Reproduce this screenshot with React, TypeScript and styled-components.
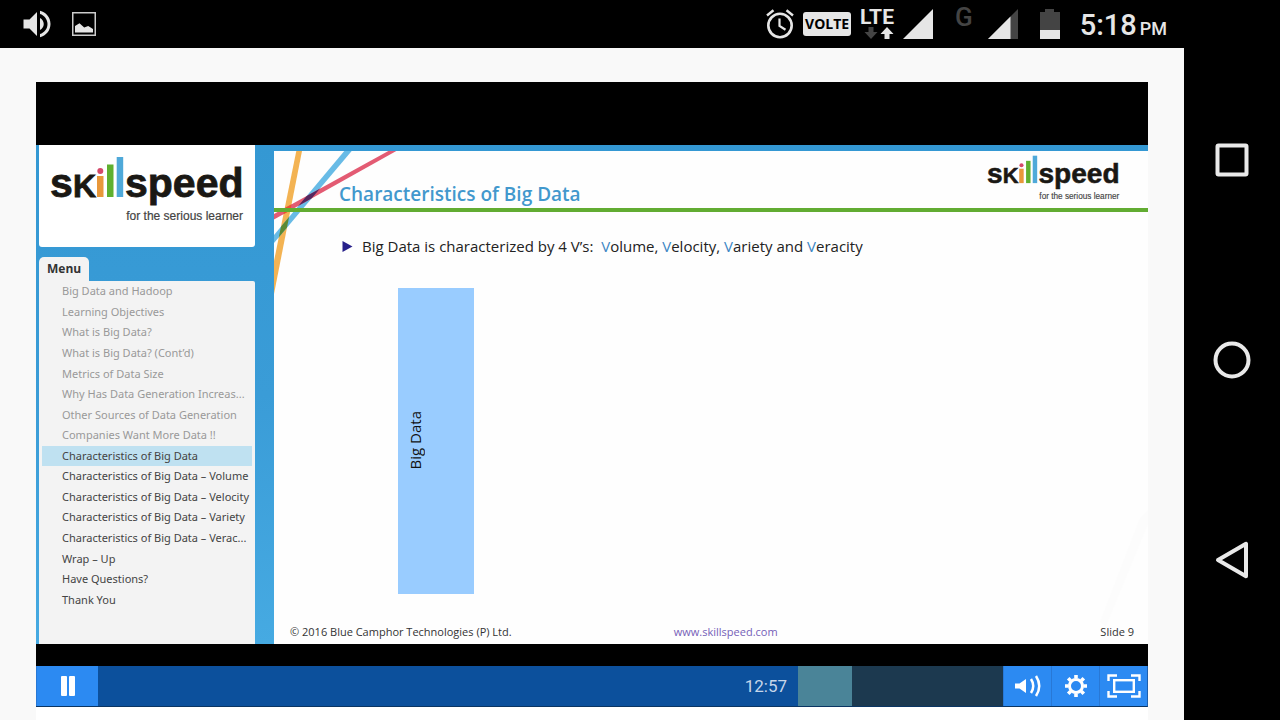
import React from "react";
import styled, { createGlobalStyle } from "styled-components";

const GlobalStyle = createGlobalStyle`
  *, *::before, *::after { box-sizing: border-box; }
  body { margin: 0; background: #000; font-family: "Open Sans", "Noto Sans", sans-serif; }
  h1, h2, p, ul { margin: 0; padding: 0; }
  ul { list-style: none; }
  button { font: inherit; border: 0; padding: 0; background: none; cursor: pointer; }
  a { color: inherit; text-decoration: none; }
  svg { display: block; flex: none; }
`;

const Screen = styled.div`
  display: flex;
  min-height: 100vh;
`;

const Main = styled.div`
  flex: 1;
  min-width: 0;
  display: flex;
  flex-direction: column;
  background: #f9f9f9;
`;

const StatusBar = styled.header`
  display: flex;
  align-items: center;
  justify-content: space-between;
  height: 48px;
  padding: 0 17px 0 19px;
  background: #000;
  color: #e6e6e6;
  font-family: Roboto, sans-serif;
`;

const StatusGroup = styled.div<{ $gap: number }>`
  display: flex;
  align-items: center;
  gap: ${(p) => p.$gap}px;
`;

const VolteBadge = styled.span`
  display: flex;
  align-items: center;
  justify-content: center;
  width: 48px;
  height: 24px;
  border-radius: 3px;
  background: #e6e6e6;
  color: #000;
  font: 700 14px/24px "Open Sans", sans-serif;
`;

const Network = styled.span<{ $dim?: boolean }>`
  display: flex;
  flex-direction: column;
  align-items: flex-end;
  height: 32px;
  font-size: ${(p) => (p.$dim ? 26 : 21)}px;
  font-weight: ${(p) => (p.$dim ? 500 : 700)};
  line-height: 18px;
  color: ${(p) => (p.$dim ? "#444" : "#e6e6e6")};
`;

const Clock = styled.time`
  display: flex;
  align-items: baseline;
  gap: 3px;
  padding-top: 6px;
  font-size: 29px;
  line-height: 46px;
  font-weight: 500;
`;

const Meridiem = styled.span`
  font-size: 18px;
`;

const NavBar = styled.nav`
  width: 96px;
  flex: none;
  display: flex;
  flex-direction: column;
  align-items: center;
  justify-content: space-around;
  padding: 60px 0;
  background: #000;
`;

const NavButton = styled.button`
  display: block;
`;

const Page = styled.main`
  flex: 1;
  display: flex;
  flex-direction: column;
  margin: 34px 36px 0;
  background: #fff;
`;

const Player = styled.section`
  padding-top: 63px;
  background: #000;
`;

const Course = styled.div`
  display: flex;
  gap: 19px;
  min-height: 499px;
  padding-left: 3px;
  background: linear-gradient(#3498d3, #3a9cd7 50%, #46aae2);
`;

const Sidebar = styled.aside`
  width: 216px;
  flex: none;
  display: flex;
  flex-direction: column;
`;

const LogoCard = styled.div`
  padding: 11px 11px 21px;
  border-radius: 0 0 3px 3px;
  background: #fff;
`;

const MenuTab = styled.h2`
  align-self: flex-start;
  margin-top: 10px;
  padding: 0 8px;
  border-radius: 5px 5px 0 0;
  background: #f3f3f3;
  color: #333;
  font-size: 12px;
  font-weight: 700;
  line-height: 24px;
`;

const MenuPanel = styled.nav`
  flex: 1;
  padding: 0 3px;
  border-radius: 0 2px 0 0;
  background: #f3f3f3;
`;

const MenuList = styled.ul`
  display: grid;
  grid-auto-rows: 1fr;
  height: 329px;
`;

const MenuItem = styled.li<{ $state: "seen" | "current" | "next" }>`
  display: flex;
  align-items: center;
  padding-left: 20px;
  background: ${(p) => (p.$state === "current" ? "#bfe1f1" : "transparent")};
  color: ${(p) => (p.$state === "seen" ? "#999" : "#444")};
  font-family: "Noto Sans", sans-serif;
  font-size: 11px;
  line-height: 18px;
  white-space: nowrap;
`;

const Slide = styled.article`
  position: relative;
  flex: 1;
  min-width: 0;
  display: flex;
  flex-direction: column;
  margin-top: 6px;
  background: #fefefe;
`;

const Ribbons = styled.svg`
  position: absolute;
  left: 0;
  top: 0;
`;

const Streak = styled.svg`
  position: absolute;
  right: 0;
  bottom: 0;
`;

const SlideHeader = styled.header`
  position: relative;
  display: flex;
  justify-content: space-between;
  align-items: flex-start;
  height: 61px;
  padding: 4px 28px 0 65px;
  border-bottom: 4px solid #62ac32;
`;

const SlideTitle = styled.h1`
  padding-top: 27px;
  color: #4298cd;
  font-size: 19px;
  font-weight: 600;
  line-height: 24px;
  white-space: nowrap;
`;

const SlideBody = styled.div`
  position: relative;
  flex: 1;
  padding: 23px 68px 0;
`;

const Bullet = styled.p`
  display: flex;
  align-items: center;
  gap: 9px;
  color: #222;
  font-size: 15px;
  line-height: 22px;
  white-space: pre;
`;

const Initial = styled.span`
  color: #3c86c4;
`;

const BigDataBar = styled.div`
  display: flex;
  align-items: center;
  width: 76px;
  height: 306px;
  margin: 31px 0 0 56px;
  padding: 0 0 2px 6px;
  background: #99ccff;
  color: #111;
  font-size: 15px;
  line-height: 22px;
`;

const BarLabel = styled.span`
  writing-mode: vertical-rl;
  transform: rotate(180deg);
`;

const SlideFooter = styled.footer`
  position: relative;
  display: grid;
  grid-template-columns: 14fr auto 13fr;
  align-items: center;
  padding: 0 14px 3px 16px;
  color: #333;
  font-size: 11px;
  line-height: 18px;
`;

const SiteLink = styled.a`
  color: #7560b8;
`;

const SlideNumber = styled.span`
  text-align: right;
`;

const Controls = styled.div`
  display: flex;
  height: 41px;
  margin-top: 22px;
  border-right: 1px solid #1c5fae;
  border-bottom: 1px solid #0a3563;
  background: #1c394f;
`;

const ControlButton = styled.button<{ $wide?: boolean }>`
  display: flex;
  align-items: center;
  justify-content: center;
  width: ${(p) => (p.$wide ? 62 : 48)}px;
  flex: none;
  border-left: 1px solid #2878d6;
  background: #2c8af2;
`;

const Track = styled.div`
  position: relative;
  flex: 1;
  display: grid;
  grid-template-columns: 700fr 54fr 151fr;
`;

const Played = styled.div`
  padding-right: 11px;
  background: #0c509c;
  color: #c6d6ea;
  font: 400 17px/40px Roboto, sans-serif;
  text-align: right;
`;

const Buffered = styled.div`
  background: #4a8498;
`;

const Seek = styled.input`
  position: absolute;
  inset: 0;
  width: 100%;
  height: 100%;
  margin: 0;
  opacity: 0;
  cursor: pointer;
`;

function Logo({ width, height }: { width: number; height: number }) {
  return (
    <svg width={width} height={height} viewBox="0 0 194 70" role="img" aria-label="skillspeed, for the serious learner">
      <g fontFamily='"Liberation Sans", Arial, sans-serif' fill="#1a1814">
        <g fontWeight="700" stroke="#1a1814" strokeWidth=".8">
          <text x="0" y="41" fontSize="41">s</text>
          <text x="23" y="41" fontSize="32">K</text>
          <text x="75" y="41" fontSize="41">speed</text>
        </g>
        <text x="193" y="64" fontSize="12" textAnchor="end" fill="#444" stroke="#444" strokeWidth=".2">
          for the serious learner
        </text>
      </g>
      <circle cx="50.3" cy="15" r="3" fill="#d4496a" />
      <rect x="47" y="20" width="6.5" height="21" fill="#e8983a" />
      <rect x="57" y="8.5" width="6.5" height="32.5" fill="#5fb02f" />
      <rect x="66.7" y="1" width="6.5" height="40" fill="#4fa9d9" />
    </svg>
  );
}

const ORANGE = "22.3,0 28,0 0,143 0,110";
const BLUE = "70.3,0 77.7,0 0,92 0,84";
const PINK = "114.3,0 122.3,0 0,68.5 0,63";

const menu = [
  "Big Data and Hadoop",
  "Learning Objectives",
  "What is Big Data?",
  "What is Big Data? (Cont’d)",
  "Metrics of Data Size",
  "Why Has Data Generation Increas...",
  "Other Sources of Data Generation",
  "Companies Want More Data !!",
  "Characteristics of Big Data",
  "Characteristics of Big Data – Volume",
  "Characteristics of Big Data – Velocity",
  "Characteristics of Big Data – Variety",
  "Characteristics of Big Data – Verac...",
  "Wrap – Up",
  "Have Questions?",
  "Thank You",
];
const currentIndex = 8;

export default function App() {
  return (
    <>
      <GlobalStyle />
      <Screen>
        <Main>
          <StatusBar>
            <StatusGroup $gap={17}>
              <svg width="36" height="36" viewBox="0 0 24 24" fill="#e6e6e6">
                <path d="M3 9v6h4l5 5V4L7 9H3zm13.5 3c0-1.77-1.02-3.29-2.5-4.03v8.05c1.48-.73 2.5-2.25 2.5-4.02zM14 3.23v2.06c2.89.86 5 3.54 5 6.71s-2.11 5.85-5 6.71v2.06c4.01-.91 7-4.49 7-8.77s-2.99-7.86-7-8.77z" />
              </svg>
              <svg width="24" height="24" viewBox="0 0 24 24">
                <rect x=".75" y=".75" width="22.5" height="22.5" fill="none" stroke="#ccc" strokeWidth="1.5" />
                <path d="M3 20.5V14l4.500-2.700 4.700 4.200 4-1.500 4.800 3v3.500z" fill="#e6e6e6" />
              </svg>
            </StatusGroup>
            <StatusGroup $gap={22}>
              <StatusGroup $gap={9}>
                <svg width="28" height="30" viewBox="0 0 28 30" fill="none" stroke="#e6e6e6" strokeWidth="2.6">
                  <circle cx="14" cy="16.5" r="11.7" />
                  <path d="M13.5 9.5V17l6 3.7" strokeWidth="2.2" />
                  <path d="M1 6.5l6.5-5.3M27 6.5l-6.5-5.3" strokeWidth="2.4" />
                </svg>
                <VolteBadge>VOLTE</VolteBadge>
                <Network>
                  LTE
                  <svg width="30" height="14" viewBox="0 0 30 14">
                    <path d="M4.5 1h5v5h4L7 13 .5 6h4z" fill="#444" />
                    <path d="M20.5 13h5V8h4L23 1l-6.5 7h4z" fill="#e6e6e6" />
                  </svg>
                </Network>
                <svg width="30" height="30" viewBox="0 0 30 30">
                  <path d="M30 0v30H0z" fill="#e6e6e6" />
                </svg>
              </StatusGroup>
              <StatusGroup $gap={15}>
                <Network $dim>G</Network>
                <svg width="30" height="30" viewBox="0 0 30 30">
                  <path d="M30 0v30H0z" fill="#444" />
                  <path d="M22.5 7.5V30H0z" fill="#e6e6e6" />
                </svg>
              </StatusGroup>
              <StatusGroup $gap={20}>
                <svg width="20" height="30" viewBox="0 0 20 30">
                  <path d="M0 3h5V0h9v3h6v27H0z" fill="#444" />
                  <path d="M0 21h20v9H0z" fill="#e6e6e6" />
                </svg>
                <Clock>
                  5:18
                  <Meridiem>PM</Meridiem>
                </Clock>
              </StatusGroup>
            </StatusGroup>
          </StatusBar>

          <Page>
            <Player>
              <Course>
                <Sidebar>
                  <LogoCard>
                    <Logo width={194} height={70} />
                  </LogoCard>
                  <MenuTab>Menu</MenuTab>
                  <MenuPanel aria-label="Menu">
                    <MenuList>
                      {menu.map((label, i) => (
                        <MenuItem key={label} $state={i < currentIndex ? "seen" : i === currentIndex ? "current" : "next"}>
                          <a href="#slide">{label}</a>
                        </MenuItem>
                      ))}
                    </MenuList>
                  </MenuPanel>
                </Sidebar>

                <Slide id="slide">
                  <Ribbons width="130" height="150" viewBox="0 0 130 150" aria-hidden="true">
                    <clipPath id="blueBand"><polygon points={BLUE} /></clipPath>
                    <clipPath id="orangeBand"><polygon points={ORANGE} /></clipPath>
                    <polygon points={ORANGE} fill="#f3b353" />
                    <polygon points={BLUE} fill="#68bbe6" />
                    <polygon points={PINK} fill="#e35b73" />
                    <polygon points={PINK} fill="#55285f" clipPath="url(#blueBand)" />
                    <polygon points={PINK} fill="#ee5030" clipPath="url(#orangeBand)" />
                    <polygon points={BLUE} fill="#5c8a34" clipPath="url(#orangeBand)" />
                  </Ribbons>
                  <Streak width="48" height="140" viewBox="0 0 48 140" aria-hidden="true">
                    <path d="M48 6L40 14 0 118l6 4L48 20z" fill="#fcfcfc" />
                  </Streak>
                  <SlideHeader>
                    <SlideTitle>Characteristics of Big Data</SlideTitle>
                    <Logo width={133} height={48} />
                  </SlideHeader>
                  <SlideBody>
                    <Bullet>
                      <svg width="11" height="11" viewBox="0 0 11 11">
                        <path d="M.5 0L10.5 5.5.5 11z" fill="#27208a" />
                      </svg>
                      <span>
                        {"Big Data is characterized by 4 V’s:  "}
                        <Initial>V</Initial>olume, <Initial>V</Initial>elocity, <Initial>V</Initial>ariety and <Initial>V</Initial>eracity
                      </span>
                    </Bullet>
                    <BigDataBar>
                      <BarLabel>Big Data</BarLabel>
                    </BigDataBar>
                  </SlideBody>
                  <SlideFooter>
                    <span>© 2016 Blue Camphor Technologies (P) Ltd.</span>
                    <SiteLink href="#skillspeed">www.skillspeed.com</SiteLink>
                    <SlideNumber>Slide 9</SlideNumber>
                  </SlideFooter>
                </Slide>
              </Course>

              <Controls>
                <ControlButton $wide aria-label="Pause">
                  <svg width="14" height="20" viewBox="0 0 14 20" fill="#fff">
                    <rect x="0" y="0" width="6" height="20" rx="1" />
                    <rect x="8" y="0" width="6" height="20" rx="1" />
                  </svg>
                </ControlButton>
                <Track>
                  <Played>12:57</Played>
                  <Buffered />
                  <Seek type="range" aria-label="Seek" min={0} max={905} defaultValue={700} />
                </Track>
                <ControlButton aria-label="Volume">
                  <svg width="28" height="24" viewBox="0 0 28 24" fill="#fff">
                    <path d="M1 9.5h4.500L12 5v14l-6.500-4.500H1z" />
                    <path d="M17 5q4.500 7 0 14M22 2q6.500 10 0 20" fill="none" stroke="#fff" strokeWidth="2.5" />
                  </svg>
                </ControlButton>
                <ControlButton aria-label="Settings">
                  <svg width="24" height="24" viewBox="-12 -12 24 24" fill="none" stroke="#fff">
                    <circle r="6.5" strokeWidth="3" />
                    <path
                      d="M0-7.5V-11M0 7.5V11M-7.5 0H-11M7.5 0H11M5.3-5.3l2.5-2.5M-5.3-5.3l-2.5-2.5M5.3 5.3l2.5 2.5M-5.3 5.3l-2.5 2.5"
                      strokeWidth="3.6"
                    />
                  </svg>
                </ControlButton>
                <ControlButton aria-label="Full screen">
                  <svg width="34" height="24" viewBox="0 0 34 24" fill="none" stroke="#fff" strokeWidth="2.4">
                    <rect x="7.2" y="6.2" width="19.6" height="11.6" />
                    <path d="M1.5 7V1.5H10M24 1.5h8.5V7M32.5 17v5.5H24M10 22.5H1.5V17" />
                  </svg>
                </ControlButton>
              </Controls>
            </Player>
          </Page>
        </Main>

        <NavBar aria-label="System">
          <NavButton aria-label="Recent apps">
            <svg width="38" height="38" viewBox="0 0 38 38" fill="none" stroke="#e9e9e9" strokeWidth="4">
              <rect x="4.5" y="4.5" width="29" height="29" rx="1" />
            </svg>
          </NavButton>
          <NavButton aria-label="Home">
            <svg width="38" height="38" viewBox="0 0 38 38" fill="none" stroke="#e9e9e9" strokeWidth="4">
              <circle cx="19" cy="19" r="16.5" />
            </svg>
          </NavButton>
          <NavButton aria-label="Back">
            <svg width="38" height="38" viewBox="0 0 38 38" fill="none" stroke="#e9e9e9" strokeWidth="4" strokeLinejoin="round">
              <path d="M33 2.8v32.4L5 19z" />
            </svg>
          </NavButton>
        </NavBar>
      </Screen>
    </>
  );
}
